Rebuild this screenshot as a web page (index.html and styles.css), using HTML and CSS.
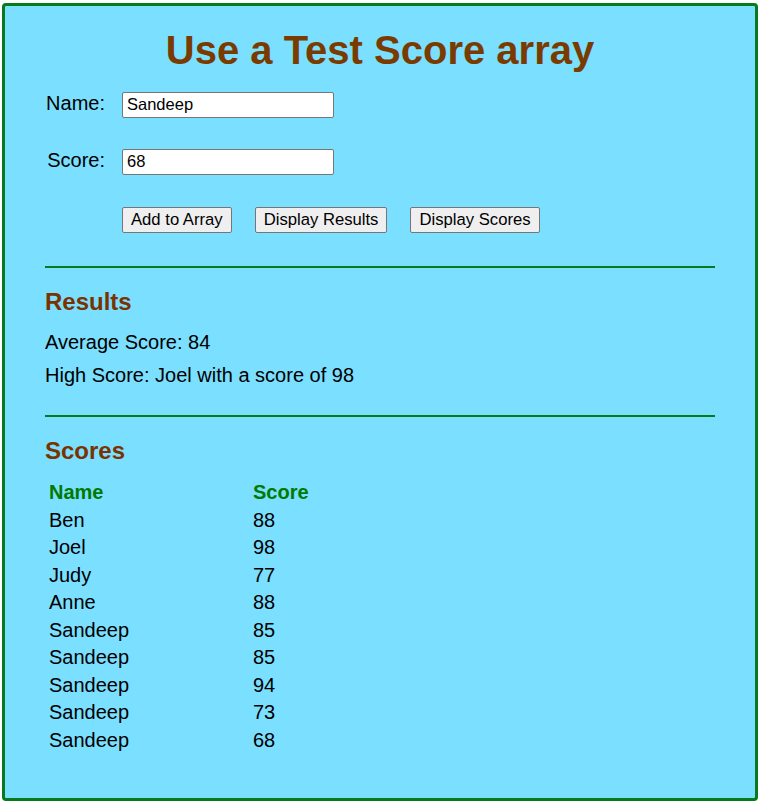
FILE: index.html
```html
<!DOCTYPE html>
<html>
<head>
<meta charset="utf-8">
<title>Test Score Array</title>
<link rel="stylesheet" href="styles.css">
</head>
<body>
<main class="box">
  <h1 class="title">Use a Test Score array</h1>
  <div class="field field-first">
    <label class="field-label" for="name">Name:</label>
    <input class="field-input" id="name" type="text" value="Sandeep">
  </div>
  <div class="field field-next">
    <label class="field-label" for="score">Score:</label>
    <input class="field-input" id="score" type="text" value="68">
  </div>
  <div class="actions">
    <button class="btn" type="button">Add to Array</button>
    <button class="btn" type="button">Display Results</button>
    <button class="btn" type="button">Display Scores</button>
  </div>
  <hr class="rule rule-first">
  <h2 class="section-title">Results</h2>
  <p class="result">Average Score: 84</p>
  <p class="result">High Score: Joel with a score of 98</p>
  <hr class="rule rule-second">
  <h2 class="section-title">Scores</h2>
  <table class="scores">
    <thead>
      <tr><th class="col-name">Name</th><th class="col-score">Score</th></tr>
    </thead>
    <tbody>
      <tr><td class="col-name">Ben</td><td class="col-score">88</td></tr>
      <tr><td class="col-name">Joel</td><td class="col-score">98</td></tr>
      <tr><td class="col-name">Judy</td><td class="col-score">77</td></tr>
      <tr><td class="col-name">Anne</td><td class="col-score">88</td></tr>
      <tr><td class="col-name">Sandeep</td><td class="col-score">85</td></tr>
      <tr><td class="col-name">Sandeep</td><td class="col-score">85</td></tr>
      <tr><td class="col-name">Sandeep</td><td class="col-score">94</td></tr>
      <tr><td class="col-name">Sandeep</td><td class="col-score">73</td></tr>
      <tr><td class="col-name">Sandeep</td><td class="col-score">68</td></tr>
    </tbody>
  </table>
</main>
</body>
</html>
```

FILE: styles.css
```css
html, body {
  margin: 0;
  padding: 0;
  background: #ffffff;
}

body {
  font-family: "Liberation Sans", Arial, sans-serif;
  font-size: 20px;
  color: #000000;
}

.box {
  display: block;
  box-sizing: border-box;
  width: 756px;
  height: 798px;
  margin: 3px 0 0 2px;
  padding: 0 40px;
  background: #7bdfff;
  border: 3px solid #067a1c;
  border-radius: 4px;
  overflow: hidden;
}

.title {
  margin: 20.5px 0 0;
  font-size: 40px;
  line-height: 46px;
  font-weight: bold;
  text-align: center;
  color: #7a3b00;
}

.field {
  display: flex;
  align-items: baseline;
}

.field-first {
  margin-top: 19px;
}

.field-next {
  margin-top: 31px;
}

.field-label {
  width: 60px;
  margin-right: 17px;
  text-align: right;
  line-height: 23px;
}

.field-input {
  box-sizing: border-box;
  width: 212px;
  height: 26px;
  margin: 0;
  padding: 0 4px;
  font-family: "Liberation Sans", Arial, sans-serif;
  font-size: 16.5px;
  color: #000000;
  background: #ffffff;
  border: 1px solid #767676;
  border-radius: 2px;
}

.actions {
  display: flex;
  gap: 23px;
  margin: 32px 0 0 77px;
}

.btn {
  box-sizing: border-box;
  height: 26px;
  margin: 0;
  padding: 0 8px;
  font-family: "Liberation Sans", Arial, sans-serif;
  font-size: 16.67px;
  color: #000000;
  background: #efefef;
  border: 1px solid #767676;
  border-radius: 2px;
}

.rule {
  height: 0;
  margin: 0;
  border: 0;
  border-top: 2px solid #067a1c;
}

.rule-first {
  margin-top: 33px;
}

.rule-second {
  margin-top: 28.5px;
}

.section-title {
  margin: 20px 0 0;
  font-size: 24px;
  line-height: 27.6px;
  font-weight: bold;
  color: #7a3300;
}

.result {
  margin: 0;
  line-height: 23px;
}

.section-title + .result {
  margin-top: 16.4px;
}

.result + .result {
  margin-top: 9.4px;
}

.scores {
  margin-top: 14.2px;
  border-collapse: collapse;
  border-spacing: 0;
}

.scores th,
.scores td {
  padding: 0 4px;
  height: 27.5px;
  line-height: 27.5px;
  text-align: left;
  vertical-align: top;
}

.scores th {
  font-weight: bold;
  color: #007a00;
}

.col-name {
  width: 196px;
}
```
